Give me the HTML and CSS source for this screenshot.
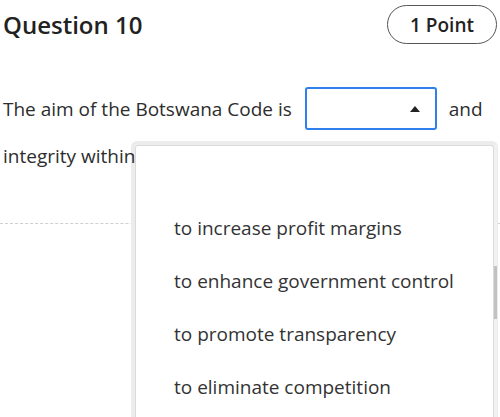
FILE: index.html
```html
<!DOCTYPE html>
<html>
<head>
<meta charset="utf-8">
<link rel="stylesheet" href="styles.css">
</head>
<body>
<div class="page">
  <div class="header">
    <h2 class="title">Question 10</h2>
    <div class="pill">1 Point</div>
  </div>
  <p class="question">The aim of the Botswana Code is <span class="select"><span class="caret"></span></span> and integrity within</p>
  <div class="sep"></div>
  <div class="listbox">
    <div class="inner">
      <div class="option"></div>
      <div class="option">to increase profit margins</div>
      <div class="option">to enhance government control</div>
      <div class="option">to promote transparency</div>
      <div class="option">to eliminate competition</div>
    </div>
    <div class="track"><div class="thumb"></div></div>
  </div>
</div>
</body>
</html>
```
FILE: styles.css
```css
html, body {
  margin: 0;
  padding: 0;
  background: #fff;
}
body {
  font-family: "Open Sans", "Liberation Sans", sans-serif;
  color: #2d2d2d;
  overflow: hidden;
  height: 417px;
}
.page {
  position: relative;
  height: 417px;
  overflow: hidden;
}
.header {
  display: flex;
  justify-content: space-between;
  align-items: center;
  padding: 5px 3px 0 3px;
  height: 39px;
}
.title {
  margin: 0;
  font-size: 24px;
  font-weight: 600;
  color: #222;
}
.pill {
  box-sizing: border-box;
  width: 110px;
  height: 39px;
  border: 1px solid #555;
  border-radius: 20px;
  display: flex;
  align-items: center;
  justify-content: center;
  font-size: 19px;
  font-weight: 600;
  color: #222;
}
.question {
  position: relative;
  z-index: 2;
  margin: 42px 0 0 0;
  padding: 0 3px;
  font-size: 19px;
  line-height: 47px;
}
.select {
  display: inline-block;
  box-sizing: border-box;
  width: 132px;
  height: 43px;
  border: 2px solid #2f80ed;
  border-radius: 3px;
  vertical-align: middle;
  margin: -4px 7px 0 8px;
  position: relative;
}
.caret {
  position: absolute;
  right: 15px;
  top: 17px;
  width: 0;
  height: 0;
  border-left: 5px solid transparent;
  border-right: 5px solid transparent;
  border-bottom: 6px solid #222;
}
.sep {
  margin-top: 43px;
  border-top: 1px dashed #cfcfcf;
}
.listbox {
  position: absolute;
  z-index: 1;
  left: 131px;
  top: 141px;
  right: 2px;
  bottom: 0;
  box-sizing: border-box;
  border: 4px solid #ececec;
  border-bottom: none;
  border-radius: 6px 6px 0 0;
  background: #fff;
}
.inner {
  box-sizing: border-box;
  height: 100%;
  border: 1px solid #dadada;
  border-bottom: none;
  border-radius: 3px 3px 0 0;
  padding-top: 2px;
  overflow: hidden;
}
.option {
  height: 53px;
  display: flex;
  align-items: center;
  padding-left: 38px;
  font-size: 19px;
  color: #333;
}
.track {
  position: absolute;
  right: -3px;
  top: 0;
  bottom: 0;
  width: 3px;
  background: #f1f1f1;
}
.thumb {
  margin-top: 121px;
  height: 53px;
  background: #c2c2c2;
}
```
